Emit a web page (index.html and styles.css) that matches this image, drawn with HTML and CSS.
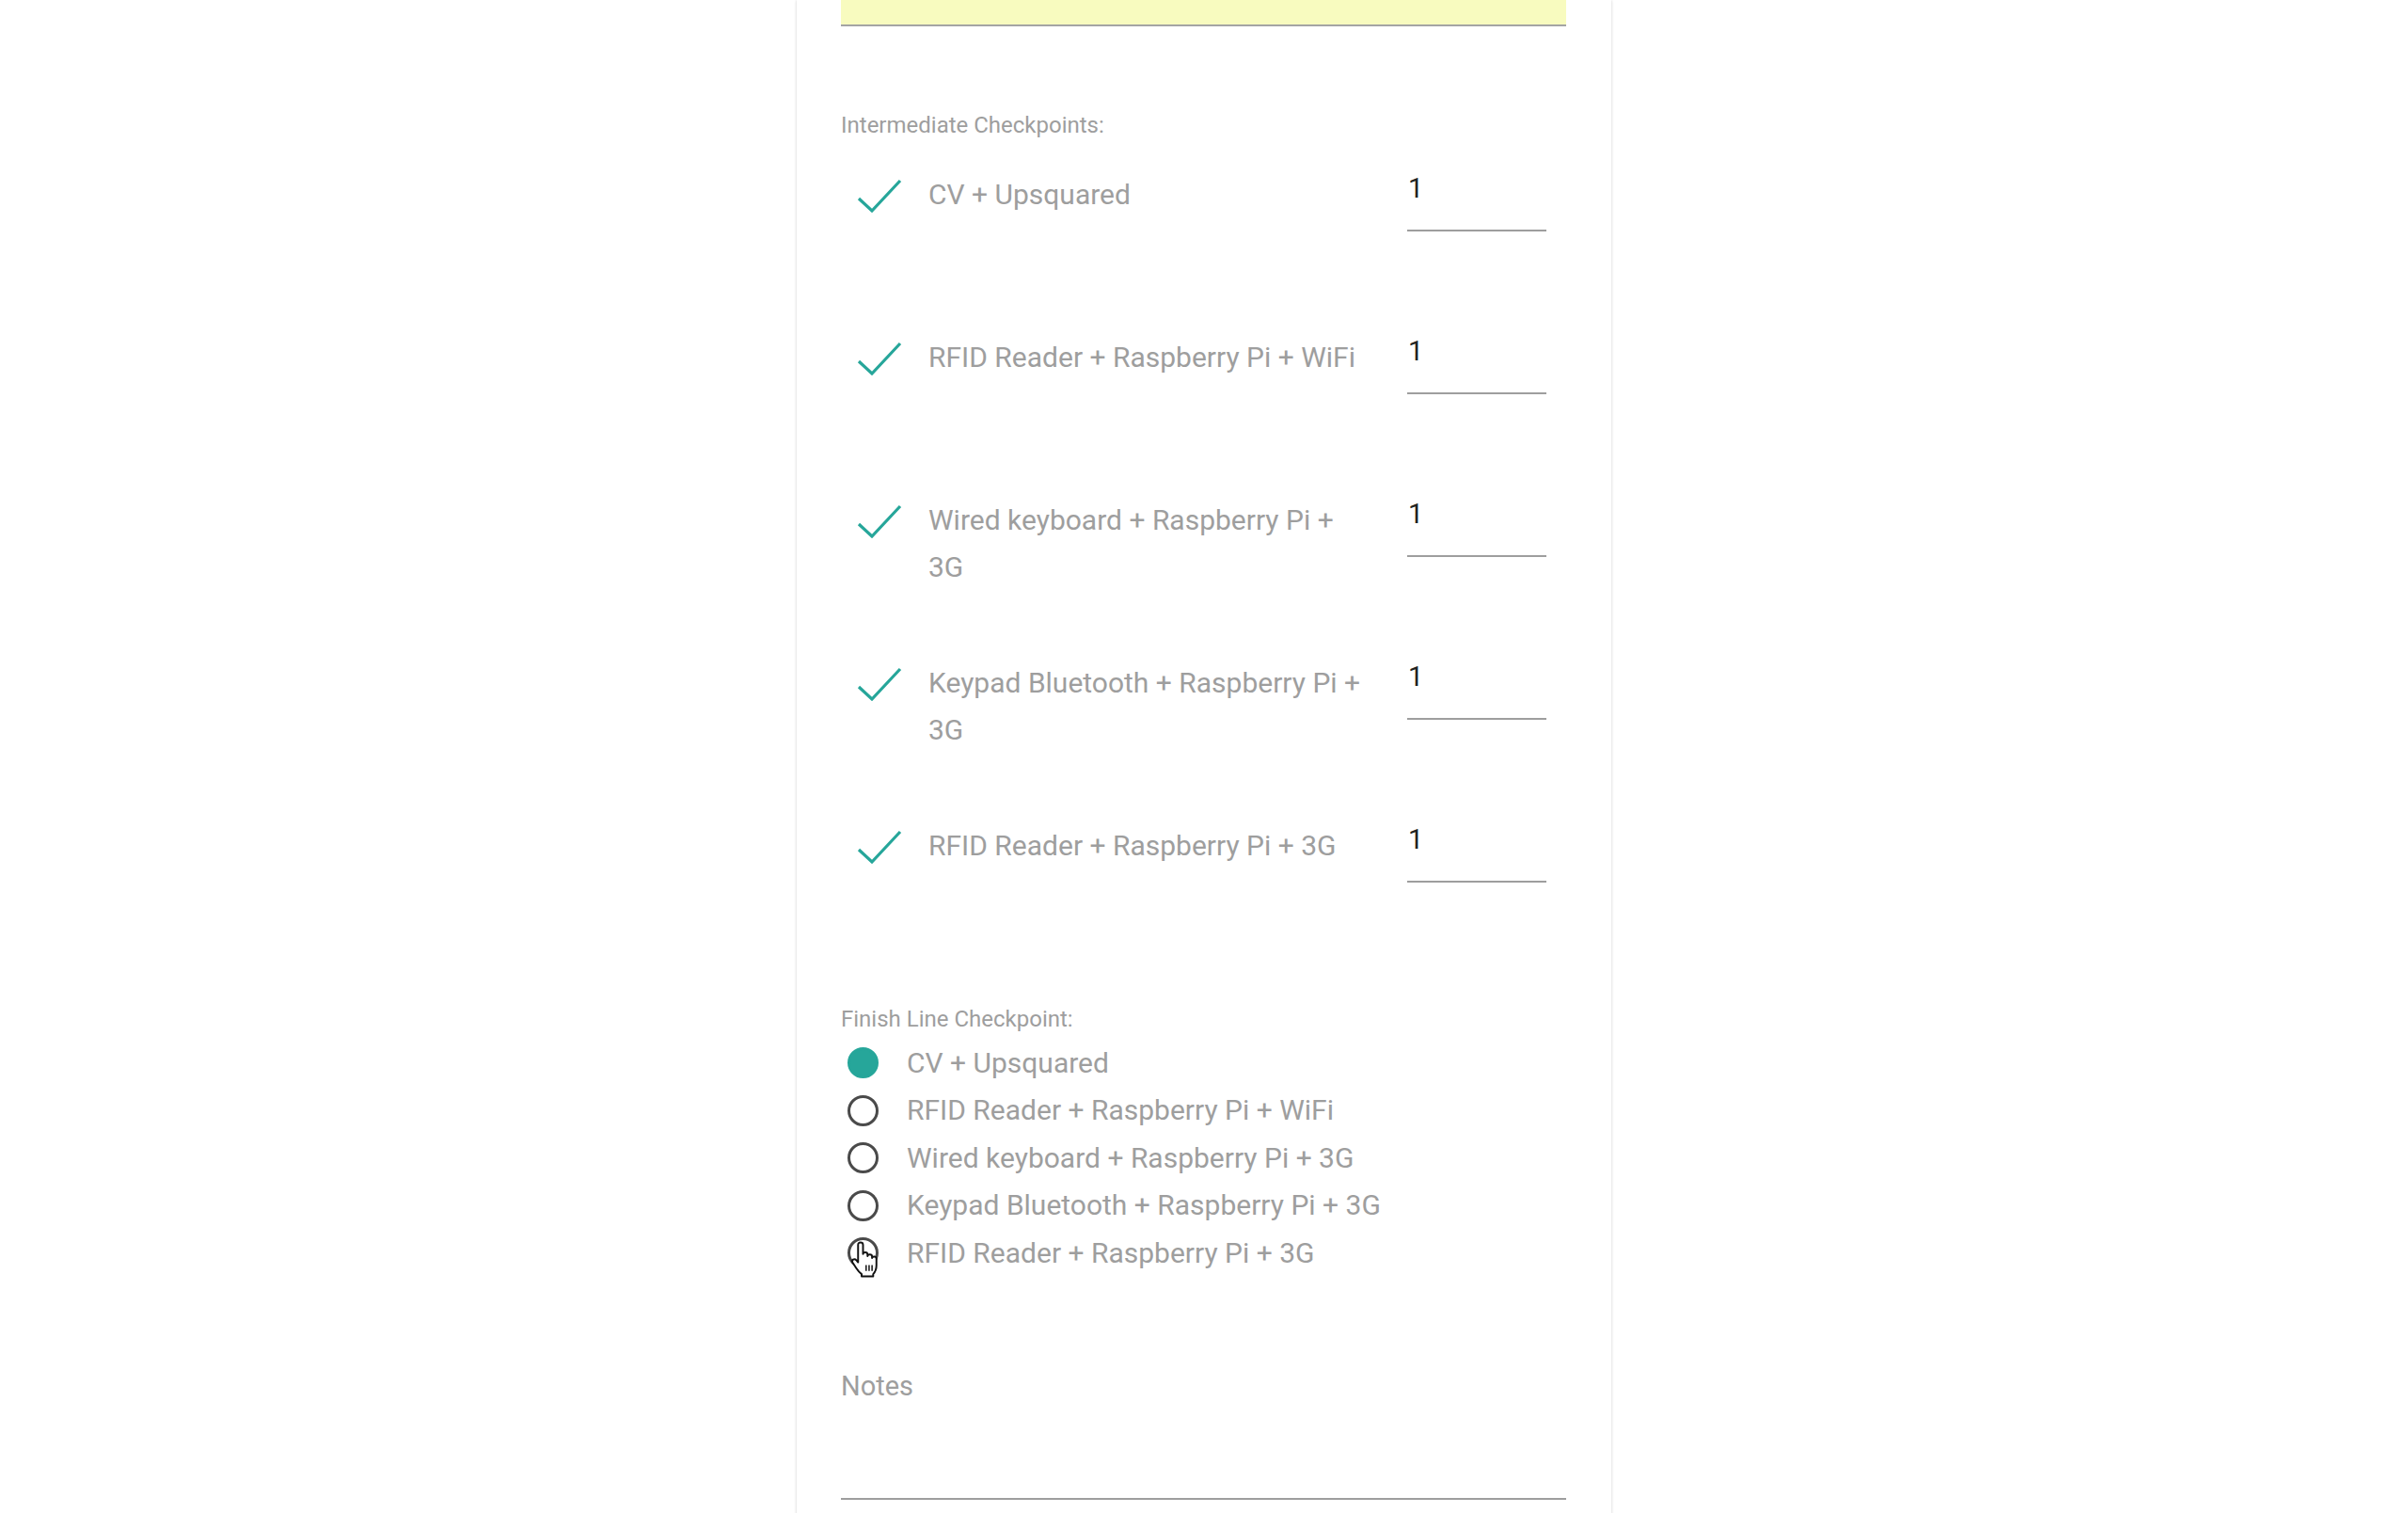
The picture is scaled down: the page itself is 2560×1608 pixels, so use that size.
FILE: index.html
```html
<!DOCTYPE html>
<html lang="en">
<head>
<meta charset="utf-8">
<title>Checkpoints</title>
<link rel="stylesheet" href="styles.css">
</head>
<body>
<div class="page">
  <div class="card">
    <div class="autofill"></div>

    <div class="section-label first">Intermediate Checkpoints:</div>

    <div class="cp-list">
      <div class="cp-row">
        <div class="cp-check"><svg width="48" height="36" viewBox="0 0 48 36"><polyline points="2,21 16,34 46,2" /></svg></div>
        <div class="cp-cell"><div class="cp-text">CV + Upsquared</div></div>
        <div class="cp-num">1</div>
      </div>
      <div class="cp-row">
        <div class="cp-check"><svg width="48" height="36" viewBox="0 0 48 36"><polyline points="2,21 16,34 46,2" /></svg></div>
        <div class="cp-cell"><div class="cp-text">RFID Reader + Raspberry Pi + WiFi</div></div>
        <div class="cp-num">1</div>
      </div>
      <div class="cp-row">
        <div class="cp-check"><svg width="48" height="36" viewBox="0 0 48 36"><polyline points="2,21 16,34 46,2" /></svg></div>
        <div class="cp-cell"><div class="cp-text">Wired keyboard + Raspberry Pi + 3G</div></div>
        <div class="cp-num">1</div>
      </div>
      <div class="cp-row">
        <div class="cp-check"><svg width="48" height="36" viewBox="0 0 48 36"><polyline points="2,21 16,34 46,2" /></svg></div>
        <div class="cp-cell"><div class="cp-text">Keypad Bluetooth + Raspberry Pi + 3G</div></div>
        <div class="cp-num">1</div>
      </div>
      <div class="cp-row">
        <div class="cp-check"><svg width="48" height="36" viewBox="0 0 48 36"><polyline points="2,21 16,34 46,2" /></svg></div>
        <div class="cp-cell"><div class="cp-text">RFID Reader + Raspberry Pi + 3G</div></div>
        <div class="cp-num">1</div>
      </div>
    </div>

    <div class="section-label second">Finish Line Checkpoint:</div>

    <div class="radio-list">
      <div class="radio-row"><span class="radio checked"></span><span class="radio-text">CV + Upsquared</span></div>
      <div class="radio-row"><span class="radio"></span><span class="radio-text">RFID Reader + Raspberry Pi + WiFi</span></div>
      <div class="radio-row"><span class="radio"></span><span class="radio-text">Wired keyboard + Raspberry Pi + 3G</span></div>
      <div class="radio-row"><span class="radio"></span><span class="radio-text">Keypad Bluetooth + Raspberry Pi + 3G</span></div>
      <div class="radio-row"><span class="radio"></span><span class="radio-text">RFID Reader + Raspberry Pi + 3G</span>
        <svg class="cursor" width="30" height="39" viewBox="0 0 20 26">
          <path d="M5.5 2.6 Q5.5 1 7.25 1 Q9 1 9 2.6 V9.2 Q9 8 10.6 8 Q12.2 8 12.2 9.6 V10.6 Q12.2 9.5 13.8 9.5 Q15.4 9.5 15.4 11 V12 Q15.4 11 16.9 11 Q18.5 11 18.5 12.6 V17.2 Q18.5 21 16.2 23.4 V25 H8 V23.4 Q6 22 4.2 19.2 L1.6 15.2 Q0.9 13.8 2 13.1 Q3.2 12.4 4.3 13.6 L5.5 15 Z" />
          <line x1="11.2" y1="17" x2="11.2" y2="21.2" />
          <line x1="13.3" y1="17" x2="13.3" y2="21.2" />
          <line x1="15.4" y1="17" x2="15.4" y2="21.2" />
        </svg>
      </div>
    </div>

    <div class="notes">
      <div class="notes-label">Notes</div>
      <div class="notes-field"></div>
    </div>
  </div>
</div>
</body>
</html>
```

FILE: styles.css
```css
html, body {
  margin: 0;
  padding: 0;
  height: 100%;
  overflow: hidden;
  background: #ffffff;
}

body {
  font-family: Roboto, "Liberation Sans", Arial, sans-serif;
  color: #9e9e9e;
}

.page {
  display: flex;
  justify-content: center;
}

.card {
  width: 866px;
  box-sizing: border-box;
  min-height: 1700px;
  padding: 0 48px 0 47px;
  background: #ffffff;
  box-shadow: 0 0 3px rgba(0, 0, 0, 0.16), 0 1px 2px rgba(0, 0, 0, 0.06);
}

.autofill {
  height: 26px;
  background: #f8fbbf;
  border-bottom: 2px solid #a4a4a4;
}

.section-label {
  font-size: 24px;
  line-height: 30px;
  height: 30px;
  color: #9e9e9e;
}

.section-label.first {
  margin-top: 90px;
}

.section-label.second {
  margin-top: 21.5px;
}

.cp-list {
  margin-top: 33.5px;
}

.cp-row {
  display: grid;
  grid-template-columns: 93px 509px 148px;
  height: 173px;
  align-items: start;
}

.cp-check {
  padding: 0 0 0 17px;
  height: 50px;
  display: flex;
  align-items: flex-start;
}

.cp-check svg {
  margin-top: 8px;
  display: block;
}

.cp-check polyline {
  fill: none;
  stroke: #26a69a;
  stroke-width: 3.2;
  stroke-linejoin: miter;
}

.cp-text {
  max-width: 468px;
  font-size: 30px;
  line-height: 50.6px;
  color: #9e9e9e;
}

.cp-num {
  height: 62.5px;
  font-size: 29px;
  line-height: 37px;
  color: #212121;
  border-bottom: 2px solid #9e9e9e;
  padding-left: 1px;
}

.radio-list {
  margin-top: 6.5px;
}

.radio-row {
  position: relative;
  display: flex;
  align-items: center;
  height: 50.5px;
}

.radio {
  box-sizing: border-box;
  width: 33px;
  height: 33px;
  margin-left: 7px;
  margin-right: 30px;
  border-radius: 50%;
  border: 3.5px solid #4a4a4a;
  flex: none;
}

.radio.checked {
  border-color: #26a69a;
  background: #26a69a;
}

.radio-text {
  font-size: 30px;
  line-height: 50.5px;
  color: #9e9e9e;
  white-space: nowrap;
}

.cursor {
  position: absolute;
  left: 10px;
  top: 12px;
}

.cursor path {
  fill: #ffffff;
  stroke: #111111;
  stroke-width: 1.3;
  stroke-linejoin: round;
}

.cursor line {
  stroke: #111111;
  stroke-width: 1;
}

.notes {
  margin-top: 96px;
}

.notes-label {
  font-size: 29px;
  line-height: 40px;
  color: #9e9e9e;
}

.notes-field {
  height: 99px;
  border-bottom: 2px solid #9e9e9e;
}
```
